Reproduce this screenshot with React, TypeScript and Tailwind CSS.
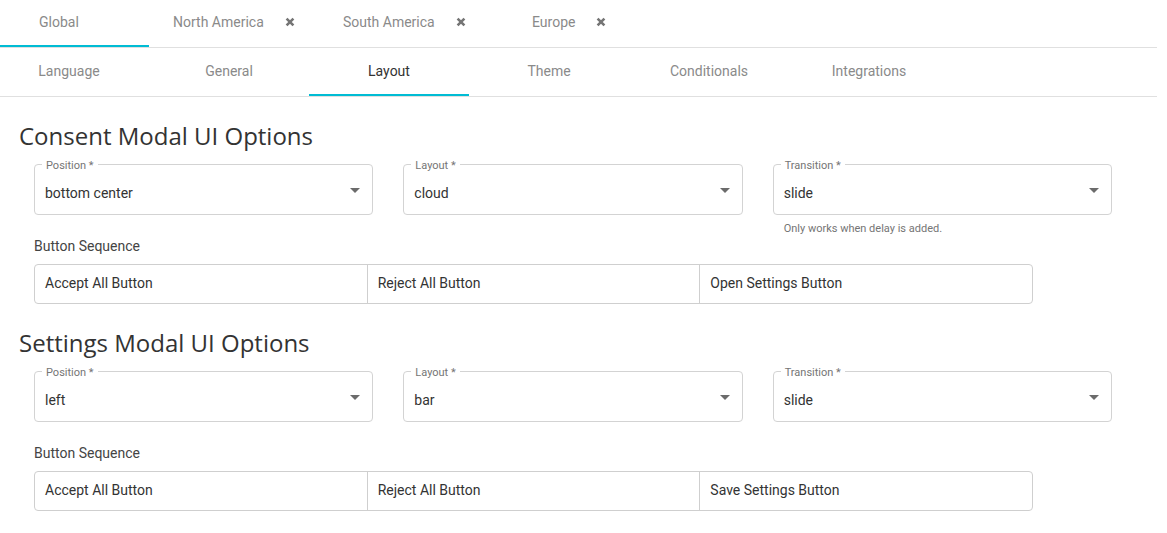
import React from "react";

const font = { fontFamily: "Roboto, 'Noto Sans', sans-serif" };
const headingFont = { fontFamily: "'Open Sans', Roboto, sans-serif" };

function CloseIcon() {
  return (
    <svg width="10" height="10" viewBox="0 0 10 10" className="ml-[21px] shrink-0">
      <path d="M1.6 1.6 L8.4 8.4 M8.4 1.6 L1.6 8.4" stroke="#757575" strokeWidth="2.6" strokeLinecap="butt" />
    </svg>
  );
}

function DropArrow() {
  return (
    <svg width="10" height="5" viewBox="0 0 10 5" className="absolute right-[12px] top-[23px]">
      <path d="M0 0 L10 0 L5 5 Z" fill="#6b6b6b" />
    </svg>
  );
}

function SelectField({ label, value }: { label: string; value: string }) {
  return (
    <div className="relative h-[51px] rounded-[4px] border border-[#d3d3d3]">
      <span className="absolute left-[7px] top-[-6px] bg-white px-[4px] text-[11px] leading-[13px] text-[#757575]">
        {label}
      </span>
      <div className="pl-[10px] pt-[18px] text-[14px] leading-[20px] text-[#333]">{value}</div>
      <DropArrow />
    </div>
  );
}

function ButtonSequence({ items }: { items: string[] }) {
  return (
    <div className="flex h-[40px] w-[999px] rounded-[4px] border border-[#cfcfcf]">
      {items.map((t, i) => (
        <div
          key={t}
          className={
            "flex flex-1 items-center pb-[2px] pl-[10px] text-[14px] text-[#333] " +
            (i > 0 ? "border-l border-[#cfcfcf]" : "")
          }
        >
          {t}
        </div>
      ))}
    </div>
  );
}

function Section({
  title,
  fields,
  helper,
  buttons,
}: {
  title: string;
  fields: { label: string; value: string }[];
  helper?: string;
  buttons: string[];
}) {
  return (
    <section>
      <h2 className="pl-[19px] text-[24px] leading-[32px] font-normal text-[#333]" style={headingFont}>
        {title}
      </h2>
      <div className="mt-[12px] pl-[34px]">
        <div className="grid w-[1078px] grid-cols-3 gap-[30px]">
          {fields.map((f) => (
            <SelectField key={f.label} label={f.label} value={f.value} />
          ))}
        </div>
        <div className="grid h-[21px] w-[1078px] grid-cols-3 gap-[30px]">
          <div />
          <div />
          <div className="pl-[11px] pt-[6px] text-[11px] leading-[16px] text-[#757575]">{helper}</div>
        </div>
        <div className="text-[14px] leading-[20px] text-[#444]">Button Sequence</div>
        <div className="mt-[8px]">
          <ButtonSequence items={buttons} />
        </div>
      </div>
    </section>
  );
}

export default function App() {
  const regions = [
    { name: "North America", w: "w-[160px]", pl: "pl-[24px]" },
    { name: "South America", w: "w-[160px]", pl: "pl-[34px]" },
    { name: "Europe", w: "w-[160px]", pl: "pl-[63px]" },
  ];
  const tabs = ["General", "Layout", "Theme", "Conditionals", "Integrations"];

  return (
    <div className="min-h-[533px] w-[1167px] bg-white pr-[10px]" style={font}>
      {/* region tabs */}
      <div className="flex h-[48px] border-b border-[#e0e0e0]">
        <div className="relative flex h-[47px] w-[149px] items-center pb-[3px] pl-[39px] text-[14px] text-[#8a8a8a]">
          Global
          <span className="absolute bottom-0 left-0 h-[2px] w-full bg-[#00bcd4]" />
        </div>
        {regions.map((r) => (
          <div key={r.name} className={`flex h-[47px] items-center pb-[3px] ${r.w} ${r.pl} text-[14px] text-[#8a8a8a]`}>
            {r.name}
            <CloseIcon />
          </div>
        ))}
      </div>

      {/* settings tabs */}
      <div className="flex h-[49px] border-b border-[#e0e0e0]">
        <div className="flex h-[48px] w-[149px] items-center justify-center pb-[2px] pr-[11px] text-[14px] text-[#8a8a8a]">
          Language
        </div>
        {tabs.map((t) => (
          <div
            key={t}
            className={
              "relative flex h-[48px] w-[160px] items-center justify-center pb-[2px] text-[14px] " +
              (t === "Layout" ? "text-[#333]" : "text-[#8a8a8a]")
            }
          >
            {t}
            {t === "Layout" && <span className="absolute bottom-0 left-0 h-[2px] w-full bg-[#00bcd4]" />}
          </div>
        ))}
      </div>

      <div className="pt-[23px]">
        <Section
          title="Consent Modal UI Options"
          fields={[
            { label: "Position *", value: "bottom center" },
            { label: "Layout *", value: "cloud" },
            { label: "Transition *", value: "slide" },
          ]}
          helper="Only works when delay is added."
          buttons={["Accept All Button", "Reject All Button", "Open Settings Button"]}
        />
        <div className="mt-[23px]">
          <Section
            title="Settings Modal UI Options"
            fields={[
              { label: "Position *", value: "left" },
              { label: "Layout *", value: "bar" },
              { label: "Transition *", value: "slide" },
            ]}
            buttons={["Accept All Button", "Reject All Button", "Save Settings Button"]}
          />
        </div>
      </div>
    </div>
  );
}
